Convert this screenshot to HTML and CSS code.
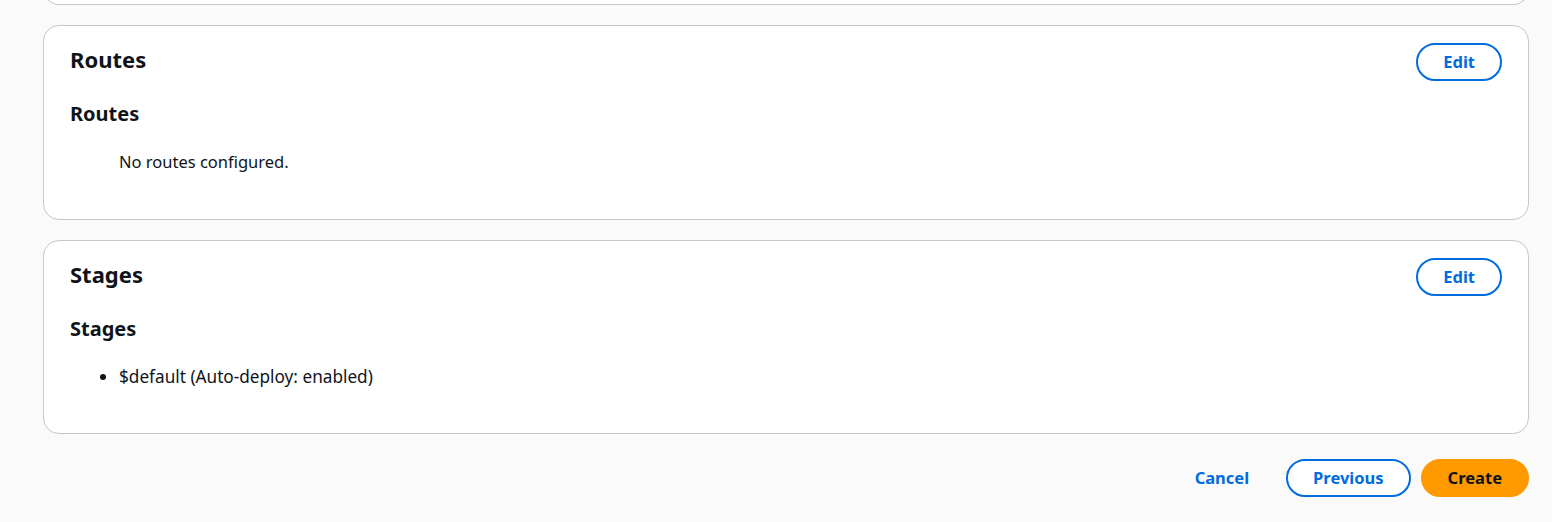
FILE: index.html
```html
<!DOCTYPE html>
<html lang="en">
<head>
    <meta charset="UTF-8">
    <meta name="viewport" content="width=device-width, initial-scale=1.0">
    <title>Review and create</title>
    <link rel="stylesheet" href="styles.css">
</head>
<body>
    <div class="page">
        <div class="card card-cut"></div>

        <section class="card">
            <div class="card-header">
                <h2>Routes</h2>
                <button class="btn btn-normal">Edit</button>
            </div>
            <h3>Routes</h3>
            <p class="empty">No routes configured.</p>
        </section>

        <section class="card">
            <div class="card-header">
                <h2>Stages</h2>
                <button class="btn btn-normal">Edit</button>
            </div>
            <h3>Stages</h3>
            <ul class="stage-list">
                <li>$default (Auto-deploy: enabled)</li>
            </ul>
        </section>

        <div class="actions">
            <button class="btn btn-link">Cancel</button>
            <button class="btn btn-normal">Previous</button>
            <button class="btn btn-primary">Create</button>
        </div>
    </div>
</body>
</html>
```

FILE: styles.css
```css
:root {
    --page-bg: #fafafa;
    --card-bg: #fff;
    --border: #c6c6cd;
    --text: #0f141a;
    --blue: #006ce0;
    --orange: #ff9900;
}
body {
    font-family: "Noto Sans", "Open Sans", Arial, sans-serif;
    margin: 0;
    background-color: var(--page-bg);
    color: var(--text);
    font-size: 16.5px;
    line-height: 24px;
}
.page {
    padding: 0 23px 24px 43px;
    display: flex;
    flex-direction: column;
    gap: 20px;
    margin-top: -20px;
}
.card {
    background-color: var(--card-bg);
    border: 1px solid var(--border);
    border-radius: 16px;
    padding: 17px 26px 45px 26px;
}
.card-cut {
    padding: 0;
    border-top: none;
    border-radius: 0 0 16px 16px;
    height: 25px;
    box-sizing: border-box;
}
.card-header {
    display: flex;
    justify-content: space-between;
    align-items: flex-start;
}
h2 {
    font-size: 22px;
    line-height: 28px;
    font-weight: 700;
    margin: 2px 0 0 0;
}
h3 {
    font-size: 20px;
    line-height: 24px;
    font-weight: 700;
    margin: 21px 0 0 0;
}
.empty {
    margin: 24px 0 0 49px;
}
.stage-list {
    margin: 24px 0 -1px 0;
    padding-left: 49px;
    font-size: 17.2px;
}
.btn {
    font-family: inherit;
    font-size: 16.5px;
    font-weight: 700;
    cursor: pointer;
    border-radius: 20px;
    padding: 6px 25px;
    line-height: 22px;
    border: 2px solid transparent;
}
.btn-normal {
    background-color: #fff;
    color: var(--blue);
    border-color: var(--blue);
}
.btn-link {
    background-color: transparent;
    color: var(--blue);
}
.btn-primary {
    background-color: var(--orange);
    color: var(--text);
    border-color: var(--orange);
}
.actions {
    display: flex;
    justify-content: flex-end;
    align-items: center;
    gap: 10px;
    margin-top: 5px;
}
```
